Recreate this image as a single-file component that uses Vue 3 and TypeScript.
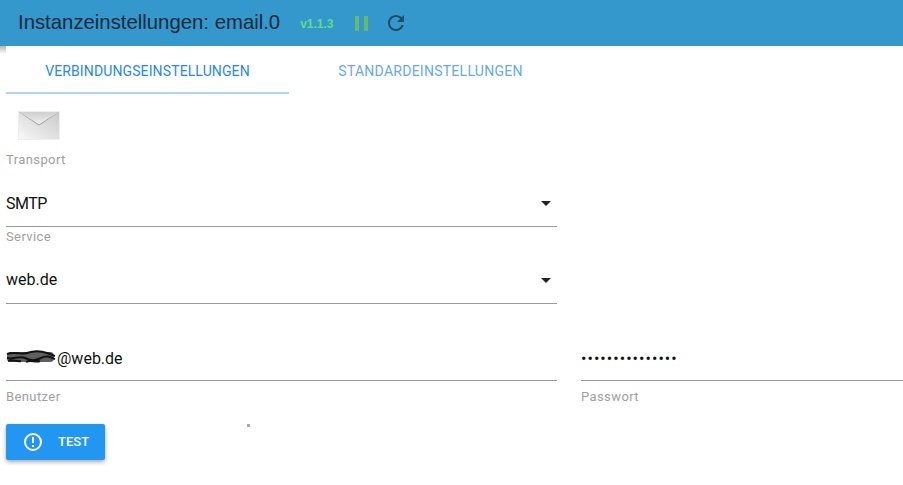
<script setup lang="ts">
const dots = '•'.repeat(15)
</script>

<template>
  <div class="page">
    <header class="bar">
      <h1 class="title">Instanzeinstellungen: email.0</h1>
      <span class="version">v1.1.3</span>
      <svg class="pause" width="13" height="15" viewBox="0 0 13 15"><path d="M0 0h4v15H0zM9 0h4v15H9z" fill="#66bb6a" /></svg>
      <svg class="reload" width="24" height="24" viewBox="0 0 24 24">
        <path d="M17.65 6.35C16.2 4.9 14.21 4 12 4c-4.42 0-7.99 3.58-7.99 8s3.57 8 7.99 8c3.73 0 6.84-2.55 7.73-6h-2.08c-.82 2.33-3.04 4-5.65 4-3.31 0-6-2.69-6-6s2.69-6 6-6c1.66 0 3.14.69 4.22 1.78L13 11h7V4l-2.35 2.35z" fill="#1f4b66" />
      </svg>
    </header>
    <div class="content">
      <i class="corner"></i>
      <nav class="tabs">
        <div class="tab active">VERBINDUNGSEINSTELLUNGEN</div>
        <div class="tab">STANDARDEINSTELLUNGEN</div>
      </nav>
      <svg class="logo" width="42" height="29" viewBox="0 0 42 29">
        <defs>
          <linearGradient id="env" x1="0" y1="1" x2="1" y2="0">
            <stop offset="0" stop-color="#f8f8f8" />
            <stop offset="0.55" stop-color="#dedede" />
            <stop offset="1" stop-color="#c8c8c8" />
          </linearGradient>
          <linearGradient id="flap" x1="0" y1="0" x2="0" y2="1">
            <stop offset="0" stop-color="#cfcfcf" />
            <stop offset="1" stop-color="#f2f2f2" />
          </linearGradient>
          <linearGradient id="fold" x1="0" y1="0" x2="1" y2="0">
            <stop offset="0" stop-color="#c4c4c4" />
            <stop offset="0.5" stop-color="#808080" />
            <stop offset="1" stop-color="#c4c4c4" />
          </linearGradient>
        </defs>
        <rect x="0.5" y="0.5" width="41" height="28" fill="url(#env)" stroke="#eee" />
        <path d="M1 1h40L21 14z" fill="url(#flap)" />
        <path d="M1 1l20 13L41 1" fill="none" stroke="url(#fold)" stroke-width="0.8" />
      </svg>
      <label class="caption first">Transport</label>
      <div class="field select"><span class="smtp">SMTP</span><i class="arrow"></i></div>
      <label class="caption after">Service</label>
      <div class="field select second"><span>web.de</span><i class="arrow"></i></div>
      <div class="credentials">
        <div class="cred">
          <div class="field user">
            <svg class="blot" width="51" height="14" viewBox="0 0 51 14">
              <rect x="1" y="2" width="47" height="10" rx="4" fill="#2a2a2a" opacity="0.75" />
              <path d="M1 4c8-3 14 1 20-1s14-2 20 0 5 2 8 3M1 8c6 2 12-3 18 0s10 3 16 0 9-1 14 1M2 11c5-2 8 1 13 0M20 12c5-3 9 1 14-1" fill="none" stroke="#111" stroke-width="2" />
            </svg>
            <span>@web.de</span>
          </div>
          <label class="caption below">Benutzer</label>
        </div>
        <div class="cred pass">
          <div class="field password"><span>{{ dots }}</span></div>
          <label class="caption below">Passwort</label>
        </div>
      </div>
      <button class="test" type="button">
        <svg width="20" height="20" viewBox="0 0 20 20">
          <circle cx="10" cy="10" r="8" fill="none" stroke="#fff" stroke-width="2" />
          <path d="M9 5h2v6H9zM9 13h2v2H9z" fill="#fff" />
        </svg>
        <span class="test-label">TEST</span>
      </button>
      <i class="speck"></i>
    </div>
  </div>
</template>

<style scoped>
.page {
  position: relative;
  width: 903px;
  height: 485px;
  overflow: hidden;
  background: #fff;
  font-family: Roboto, sans-serif;
}
.bar {
  display: flex;
  align-items: center;
  height: 46px;
  padding-left: 18px;
  background: #3498cc;
  box-sizing: border-box;
}
.title {
  margin: 0;
  padding-bottom: 2px;
  font: 400 20.33px "Liberation Sans", Arial, sans-serif;
  color: #14293a;
}
.version {
  margin-left: 20px;
  padding-top: 1px;
  font: 700 12px "Liberation Sans", Arial, sans-serif;
  color: #62dc84;
}
.pause { margin-left: 21px; }
.reload { margin-left: 16px; }
.content {
  position: relative;
  padding-left: 6px;
}
.corner {
  position: absolute;
  left: 0;
  top: 0;
  width: 6px;
  height: 8px;
  background: linear-gradient(#b5b5b5, #fff);
}
.tabs {
  display: flex;
  height: 48px;
}
.tab {
  width: 283px;
  box-sizing: border-box;
  padding-top: 17px;
  text-align: center;
  font-size: 14px;
  color: #64a9f5;
  letter-spacing: 0.26px;
}
.tab.active {
  color: #1e88f5;
  border-bottom: 2px solid #a9d7fb;
  letter-spacing: 0.12px;
}
.logo {
  display: block;
  margin: 17px 0 0 12px;
}
.caption {
  display: block;
  font-size: 13px;
  line-height: 14px;
  color: #a0a0a0;
  letter-spacing: 0.4px;
}
.caption.first { margin-top: 13px; }
.caption.after { margin-top: 3px; }
.field {
  width: 551px;
  box-sizing: border-box;
  height: 60px;
  padding-top: 27px;
  border-bottom: 1px solid #9a9a9a;
  font-size: 16px;
  line-height: 19px;
  color: #111;
}
.smtp { letter-spacing: -0.5px; }
.select {
  position: relative;
}
.select.second { padding-top: 26px; }
.arrow {
  position: absolute;
  right: 6px;
  top: 34px;
  border-left: 5px solid transparent;
  border-right: 5px solid transparent;
  border-top: 5px solid #222;
}
.credentials {
  display: flex;
  gap: 24px;
  margin-top: 3px;
}
.cred .field {
  height: 74px;
  padding-top: 42px;
  display: flex;
}
.cred.pass { flex: 1; }
.cred.pass .field { width: 100%; }
.password { letter-spacing: 1.05px; }
.blot {
  margin-top: 1px;
  filter: blur(0.6px);
}
.caption.below { margin-top: 9px; }
.test {
  display: flex;
  align-items: center;
  gap: 15px;
  width: 99px;
  height: 36px;
  margin-top: 20px;
  padding: 0 0 0 17px;
  border: 0;
  border-radius: 2px;
  background: #2196f3;
  color: #fff;
  font: 500 13px Roboto, sans-serif;
  box-shadow: 0 2px 4px rgba(0, 0, 0, 0.35);
}
.test-label { margin-top: -1px; }
.speck {
  position: absolute;
  left: 247px;
  top: 378px;
  width: 3px;
  height: 3px;
  background: #aaa;
}
</style>
